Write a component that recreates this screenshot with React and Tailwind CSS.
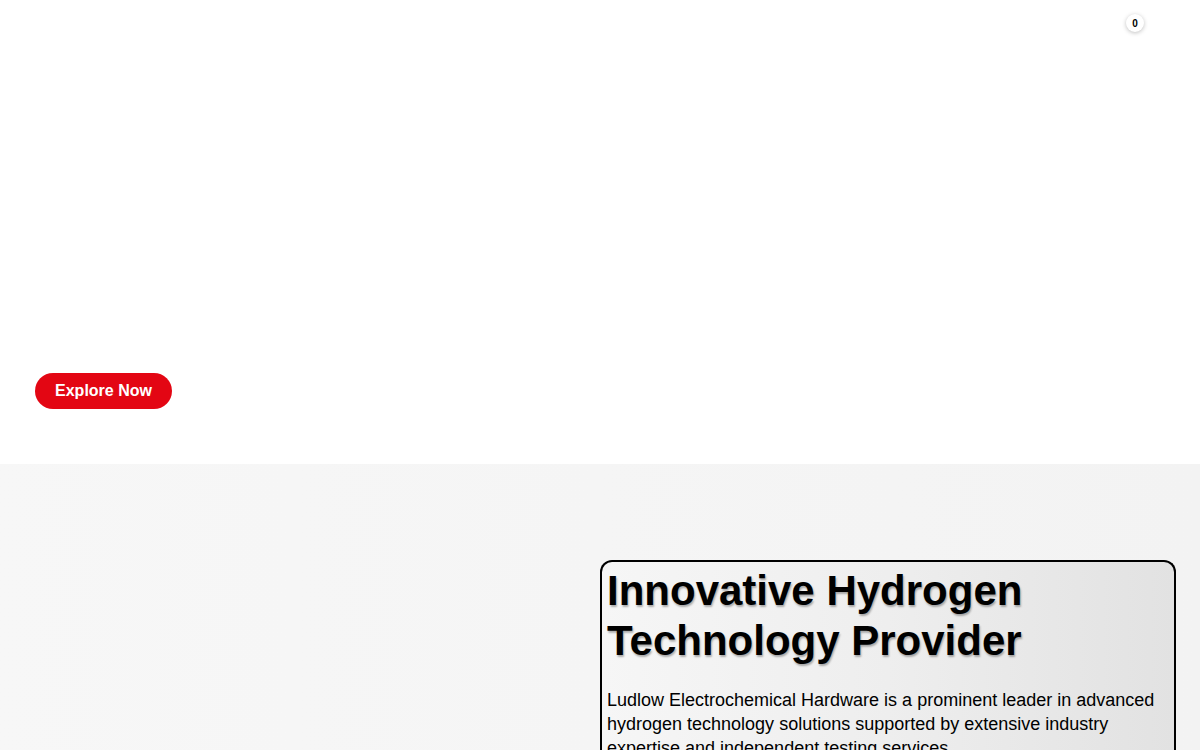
export default function App() {
  return (
    <div className="min-h-screen bg-white font-['Liberation_Sans',Arial,sans-serif] text-black">
      {/* Hero */}
      <section className="relative h-[464px] bg-white">
        <div className="flex justify-end pr-[56px] pt-[14px]">
          <span className="flex h-[18px] w-[18px] items-center justify-center rounded-full bg-white text-[10px] font-bold shadow-[0_1px_4px_rgba(0,0,0,0.25)]">
            0
          </span>
        </div>
        <div className="absolute left-[35px] top-[373px]">
          <button className="flex h-[36px] w-[137px] items-center justify-center rounded-full bg-[#e30613] text-[16px] font-bold text-white">
            Explore Now
          </button>
        </div>
      </section>

      {/* About */}
      <section className="flex h-[286px] bg-gradient-to-r from-[#f7f7f7] to-[#f3f3f3] pt-[96px]">
        <div className="w-[600px] shrink-0" />
        <div className="w-[576px] rounded-t-[12px] border-2 border-b-0 border-black bg-gradient-to-r from-[#f6f6f6] via-[#eeeeee] to-[#e2e2e2] px-[5px] pt-[4px]">
          <h1 className="text-[42px] font-bold leading-[50px] [text-shadow:1px_2px_2px_rgba(0,0,0,0.3)]">
            Innovative Hydrogen
            <br />
            Technology Provider
          </h1>
          <p className="mt-[22px] pr-[10px] text-[18px] leading-[24px]">
            Ludlow Electrochemical Hardware is a prominent leader in advanced hydrogen technology solutions supported by extensive industry expertise and independent testing services.
          </p>
        </div>
      </section>
    </div>
  )
}
